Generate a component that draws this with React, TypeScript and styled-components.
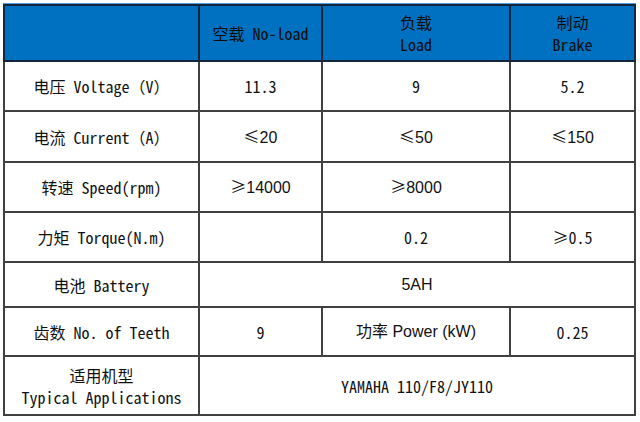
import React from "react";
import styled, { createGlobalStyle } from "styled-components";

const Global = createGlobalStyle`
  html, body { margin: 0; padding: 0; background: #ffffff; }
  body {
    font-family: "Noto Sans Mono CJK SC", "Liberation Mono", "Noto Sans CJK SC", monospace;
    color: #111111;
  }
`;

const Page = styled.div`
  width: 640px;
  height: 422px;
  box-sizing: border-box;
  padding: 4px 0 0 3px;
  background: #ffffff;
`;

const Table = styled.table`
  border-collapse: collapse;
  table-layout: fixed;
  width: 631px;
  box-shadow: 0 -1px 0 #4f9be0;
`;

const Row = styled.tr<{ $h: number }>`
  height: ${(p) => p.$h}px;
`;

const Head = styled.th`
  background: #0070c0;
  border: 2px solid #14263c;
  font-weight: normal;
  font-size: 16px;
  line-height: 22px;
  color: #0d0d0d;
  text-align: center;
  vertical-align: middle;
  padding: 0;
`;

const Cell = styled.td<{ $sans?: boolean }>`
  border: 2px solid #404040;
  font-size: 16px;
  line-height: 22px;
  text-align: center;
  vertical-align: middle;
  padding: 0;
  color: #111111;
  font-family: ${(p) =>
    p.$sans
      ? `"Liberation Sans", "Noto Sans CJK SC", sans-serif`
      : `"Noto Sans Mono CJK SC", "Liberation Mono", "Noto Sans CJK SC", monospace`};
`;

const Sign = styled.span`
  font-family: "Noto Sans CJK SC", sans-serif;
`;

export default function App() {
  return (
    <Page>
      <Global />
      <Table>
        <colgroup>
          <col style={{ width: 195 }} />
          <col style={{ width: 123 }} />
          <col style={{ width: 188 }} />
          <col style={{ width: 125 }} />
        </colgroup>
        <thead>
          <Row $h={56}>
            <Head />
            <Head>空载 No-load</Head>
            <Head>
              负载
              <br />
              Load
            </Head>
            <Head>
              制动
              <br />
              Brake
            </Head>
          </Row>
        </thead>
        <tbody>
          <Row $h={50}>
            <Cell>电压 Voltage（V）</Cell>
            <Cell>11.3</Cell>
            <Cell>9</Cell>
            <Cell>5.2</Cell>
          </Row>
          <Row $h={51}>
            <Cell>电流 Current（A）</Cell>
            <Cell $sans>
              <Sign>≤</Sign>20
            </Cell>
            <Cell $sans>
              <Sign>≤</Sign>50
            </Cell>
            <Cell $sans>
              <Sign>≤</Sign>150
            </Cell>
          </Row>
          <Row $h={50}>
            <Cell>转速 Speed(rpm)</Cell>
            <Cell $sans>
              <Sign>≥</Sign>14000
            </Cell>
            <Cell $sans>
              <Sign>≥</Sign>8000
            </Cell>
            <Cell />
          </Row>
          <Row $h={50}>
            <Cell>力矩 Torque(N.m)</Cell>
            <Cell />
            <Cell>0.2</Cell>
            <Cell>
              <Sign>≥</Sign>0.5
            </Cell>
          </Row>
          <Row $h={45}>
            <Cell>电池 Battery</Cell>
            <Cell $sans colSpan={3}>
              5AH
            </Cell>
          </Row>
          <Row $h={49}>
            <Cell>齿数 No. of Teeth</Cell>
            <Cell>9</Cell>
            <Cell $sans>功率 Power (kW)</Cell>
            <Cell>0.25</Cell>
          </Row>
          <Row $h={59}>
            <Cell>
              适用机型
              <br />
              Typical Applications
            </Cell>
            <Cell colSpan={3}>YAMAHA 110/F8/JY110</Cell>
          </Row>
        </tbody>
      </Table>
    </Page>
  );
}
